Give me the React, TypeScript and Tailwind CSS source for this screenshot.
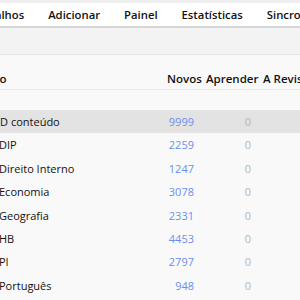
import React from 'react';

const decks = [
  { name: 'ID conteúdo', novos: 9999, first: true },
  { name: 'DIP', novos: 2259 },
  { name: 'Direito Interno', novos: 1247 },
  { name: 'Economia', novos: 3078 },
  { name: 'Geografia', novos: 2331 },
  { name: 'HB', novos: 4453 },
  { name: 'PI', novos: 2797 },
  { name: 'Português', novos: 948 },
];

export default function App() {
  return (
    <div
      className="h-[300px] w-[300px] overflow-hidden bg-[#f9f9f9] text-[11px] text-[#111]"
      style={{ fontFamily: '"Open Sans", "Noto Sans", sans-serif' }}
    >
      {/* toolbar */}
      <div className="bg-[#efefef] pt-[3px]">
        <div className="flex h-[25px] items-center gap-[24px] whitespace-nowrap border-b-2 border-[#d6d6d6] bg-white pt-px text-[11.3px] font-semibold">
          <span className="-ml-[24px]">Baralhos</span>
          <span>Adicionar</span>
          <span>Painel</span>
          <span>Estatísticas</span>
          <span>Sincronizar</span>
        </div>
      </div>
      <div className="h-[27px] border-b border-[#e8e8e8] bg-[#f3f3f3]" />

      {/* deck table */}
      <div className="pt-[14px]">
        <div className="flex h-[21px] items-center whitespace-nowrap border-b border-[#ececec] pb-[1px] text-[11.5px] font-semibold">
          <span className="-ml-[37px] w-[204px] shrink-0">Baralho</span>
          <span className="w-[39px] shrink-0">Novos</span>
          <span className="w-[57px] shrink-0">Aprender</span>
          <span>A Revisar</span>
        </div>
        <div className="pt-[20px]">
          {decks.map((d) => (
            <div
              key={d.name}
              className={`flex h-[23.4px] items-center whitespace-nowrap pt-px ${
                d.first ? 'bg-[#e3e3e3]' : ''
              }`}
            >
              <span className={`w-[160px] shrink-0 ${d.first ? '-ml-[4px]' : '-ml-[1px]'}`}>
                <span className={d.first ? 'pl-px' : ''}>{d.name}</span>
              </span>
              <span className={`w-[35px] shrink-0 text-right text-[#6b8ff0] ${d.first ? 'ml-[3px]' : ''}`}>
                {d.novos}
              </span>
              <span className="w-[57px] shrink-0 text-right text-[#b5b5b5]">0</span>
            </div>
          ))}
        </div>
      </div>
    </div>
  );
}
